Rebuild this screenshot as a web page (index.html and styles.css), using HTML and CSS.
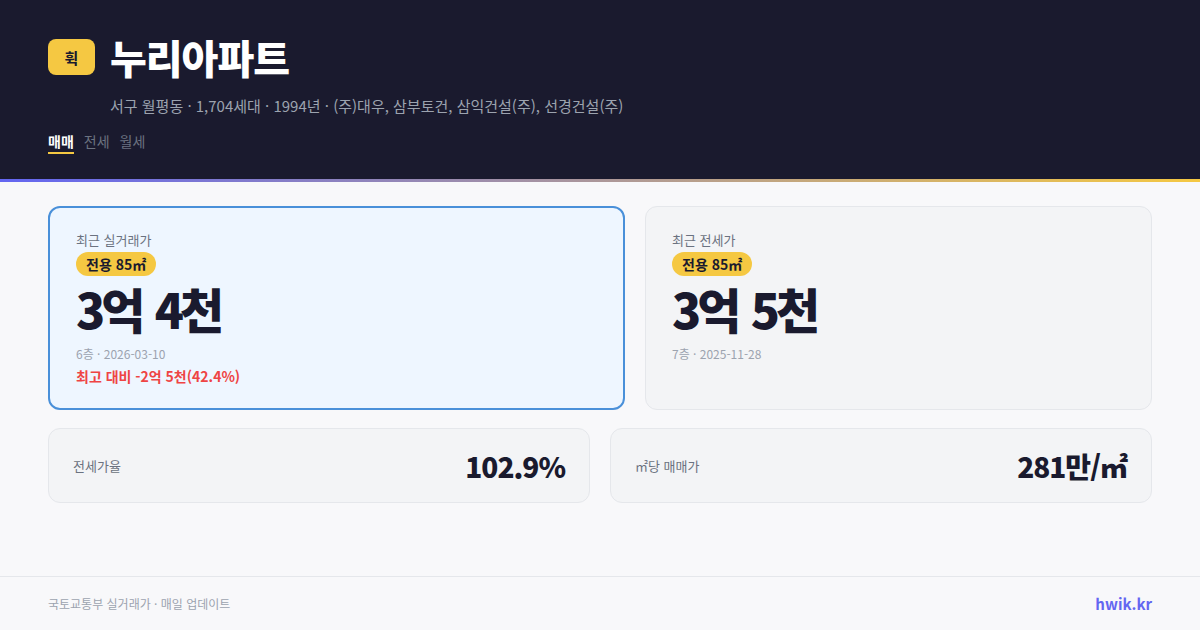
FILE: index.html
```html
<!DOCTYPE html>
<html lang="ko">
<head>
<meta charset="utf-8">
<link rel="stylesheet" href="styles.css">
</head>
<body>
<div class="page">
  <header class="hero">
    <div class="title-row">
      <div class="logo">휙</div>
      <h1 class="title">누리아파트</h1>
    </div>
    <div class="meta">서구 월평동 · 1,704세대 · 1994년 · (주)대우, 삼부토건, 삼익건설(주), 선경건설(주)</div>
    <nav class="tabs">
      <span class="tab active">매매</span>
      <span class="tab">전세</span>
      <span class="tab">월세</span>
    </nav>
  </header>
  <div class="accent"></div>
  <main class="content">
    <div class="cards">
      <section class="card primary">
        <div class="card-label">최근 실거래가</div>
        <span class="badge">전용 85㎡</span>
        <div class="price">3억 4천</div>
        <div class="sub">6층 · 2026-03-10</div>
        <div class="diff">최고 대비 -2억 5천(42.4%)</div>
      </section>
      <section class="card">
        <div class="card-label">최근 전세가</div>
        <span class="badge">전용 85㎡</span>
        <div class="price">3억 5천</div>
        <div class="sub">7층 · 2025-11-28</div>
      </section>
    </div>
    <div class="stats">
      <div class="stat">
        <span class="stat-label">전세가율</span>
        <span class="stat-value">102.9%</span>
      </div>
      <div class="stat">
        <span class="stat-label">㎡당 매매가</span>
        <span class="stat-value">281만/㎡</span>
      </div>
    </div>
  </main>
  <footer class="footer">
    <span class="source">국토교통부 실거래가 · 매일 업데이트</span>
    <span class="brand">hwik.kr</span>
  </footer>
</div>
</body>
</html>
```
FILE: styles.css
```css
* { box-sizing: border-box; margin: 0; padding: 0; }
html, body { width: 1200px; height: 630px; overflow: hidden; }
body {
  background: #f8f8fa;
  font-family: "Noto Sans CJK KR", "Noto Sans", sans-serif;
  color: #1a1a2e;
}
.page { display: flex; flex-direction: column; height: 630px; }
.hero {
  background: #1a1a2e;
  padding: 36px 48px 0 48px;
  height: 179px;
}
.title-row { display: flex; align-items: center; gap: 15px; height: 42px; }
.logo {
  width: 47px; height: 36px;
  background: #f5c842;
  border-radius: 8px;
  display: flex; align-items: center; justify-content: center;
  font-size: 15px; font-weight: 700; color: #1a1a2e;
}
.title {
  font-size: 40px; font-weight: 800; color: #ffffff;
  letter-spacing: -1px; line-height: 42px;
}
.meta {
  margin: 17px 0 0 62px;
  font-size: 15px; color: #9ca3af; line-height: 22px;
}
.tabs { display: flex; gap: 10px; margin-top: 14px; }
.tab {
  font-size: 14px; color: #6b7280; line-height: 20px;
  padding-bottom: 1px;
}
.tab.active {
  color: #ffffff; font-weight: 700;
  border-bottom: 2px solid #f5c842;
}
.accent { height: 3px; background: linear-gradient(90deg, #6366f1, #f5c842); }
.content { padding: 24px 48px 0 48px; flex: 1; }
.cards { display: grid; grid-template-columns: 577px 1fr; gap: 20px; }
.card {
  background: #f3f4f6;
  border: 1px solid #e5e7eb;
  border-radius: 12px;
  padding: 24px 26px;
  height: 204px;
  display: flex; flex-direction: column; align-items: flex-start;
}
.card.primary { background: #eef6ff; border: 2px solid #4a90d9; padding: 23px 26px; }
.card-label { font-size: 13px; color: #6b7280; line-height: 18px; }
.badge {
  margin-top: 3px;
  background: #f5c842; color: #1a1a2e;
  font-size: 14px; font-weight: 700;
  padding: 1px 10px; border-radius: 12px; line-height: 22px;
}
.price { font-size: 48px; font-weight: 900; line-height: 64px; letter-spacing: -4px; word-spacing: 4px; color: #1a1a2e; }
.sub { font-size: 12px; color: #9ca3af; line-height: 18px; margin-top: 5px; }
.diff { font-size: 14px; color: #ef4444; font-weight: 700; line-height: 22px; margin-top: 2px; }
.stats { display: grid; grid-template-columns: 1fr 1fr; gap: 20px; margin-top: 18px; }
.stat {
  background: #f3f4f6; border: 1px solid #e5e7eb; border-radius: 12px;
  height: 75px; padding: 0 24px;
  display: flex; align-items: center; justify-content: space-between;
}
.stat-label { font-size: 13px; color: #6b7280; }
.stat-value { font-size: 28px; font-weight: 800; color: #1a1a2e; letter-spacing: -1px; }
.footer {
  border-top: 1px solid #e5e7eb;
  height: 54px; padding: 0 48px;
  display: flex; align-items: center; justify-content: space-between;
}
.source { font-size: 12px; color: #9ca3af; }
.brand { font-size: 15px; font-weight: 700; color: #6366f1; }
```
